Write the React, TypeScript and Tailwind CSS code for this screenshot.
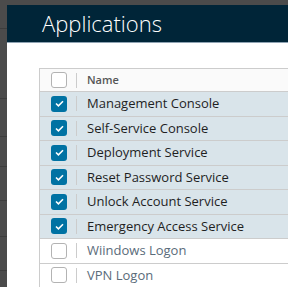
import React from 'react';

interface AppRow {
  name: string;
  checked: boolean;
}

const rows: AppRow[] = [
  { name: 'Management Console', checked: true },
  { name: 'Self-Service Console', checked: true },
  { name: 'Deployment Service', checked: true },
  { name: 'Reset Password Service', checked: true },
  { name: 'Unlock Account Service', checked: true },
  { name: 'Emergency Access Service', checked: true },
  { name: 'Wiindows Logon', checked: false },
  { name: 'VPN Logon', checked: false },
];

const Checkbox: React.FC<{ checked: boolean }> = ({ checked }) =>
  checked ? (
    <span className="flex h-[16px] w-[16px] items-center justify-center rounded-[3px] bg-[#0072a3]">
      <svg width="9" height="7" viewBox="0 0 9 7" fill="none">
        <path d="M1 3.5L3.4 5.8L8 1.2" stroke="white" strokeWidth="1.6" />
      </svg>
    </span>
  ) : (
    <span className="block h-[16px] w-[16px] rounded-[3px] border border-[#b3b3b3] bg-white" />
  );

export default function App() {
  return (
    <div className="flex h-[287px] w-[288px] overflow-hidden bg-[#4b4b4b] pt-[5px] font-['Open_Sans',sans-serif]">
      <div className="flex w-[7px] shrink-0 flex-col">
        <div className="h-[24px] border-b border-[#3d3d3d]" />
        <div className="h-[70px] border-b border-[#3d3d3d]" />
        <div className="h-[38px] border-b border-[#3d3d3d]" />
        <div className="h-[30px] border-b border-[#3d3d3d]" />
        <div className="h-[34px] border-b border-[#3d3d3d]" />
        <div className="h-[36px] border-b border-[#3d3d3d]" />
        <div className="h-[34px] border-b border-[#3d3d3d]" />
      </div>
      <div className="flex min-w-0 flex-1 flex-col bg-white">
        <div className="flex h-[38px] shrink-0 items-center border-b border-[#8fa3b3] bg-[#002538] pl-[35px] text-[22px] font-light text-white">
          Applications
        </div>
        <div className="pl-[32px] pt-[25px]">
          <div className="border-l border-t border-[#cccccc]">
            <div className="flex h-[23px] items-center border-b border-[#cccccc] bg-[#fafafa]">
              <div className="flex w-[36px] justify-center pl-[2px]">
                <Checkbox checked={false} />
              </div>
              <span className="h-[15px] w-px bg-[#cccccc]" />
              <span className="pl-[10px] text-[11px] font-semibold text-[#565656]">Name</span>
            </div>
            {rows.map((row) => (
              <div
                key={row.name}
                className={`flex h-[24.5px] items-center border-b border-[#cccccc] ${
                  row.checked ? 'bg-[#d9e4ea]' : 'bg-white'
                }`}
              >
                <div className="flex w-[36px] justify-center pl-[2px]">
                  <Checkbox checked={row.checked} />
                </div>
                <span className="h-[15px] w-px bg-[#cccccc]" />
                <span
                  className={`whitespace-nowrap pl-[10px] text-[13px] ${
                    row.checked ? 'text-[#1f1f1f]' : 'text-[#5a6b7a]'
                  }`}
                >
                  {row.name}
                </span>
              </div>
            ))}
          </div>
        </div>
      </div>
    </div>
  );
}
